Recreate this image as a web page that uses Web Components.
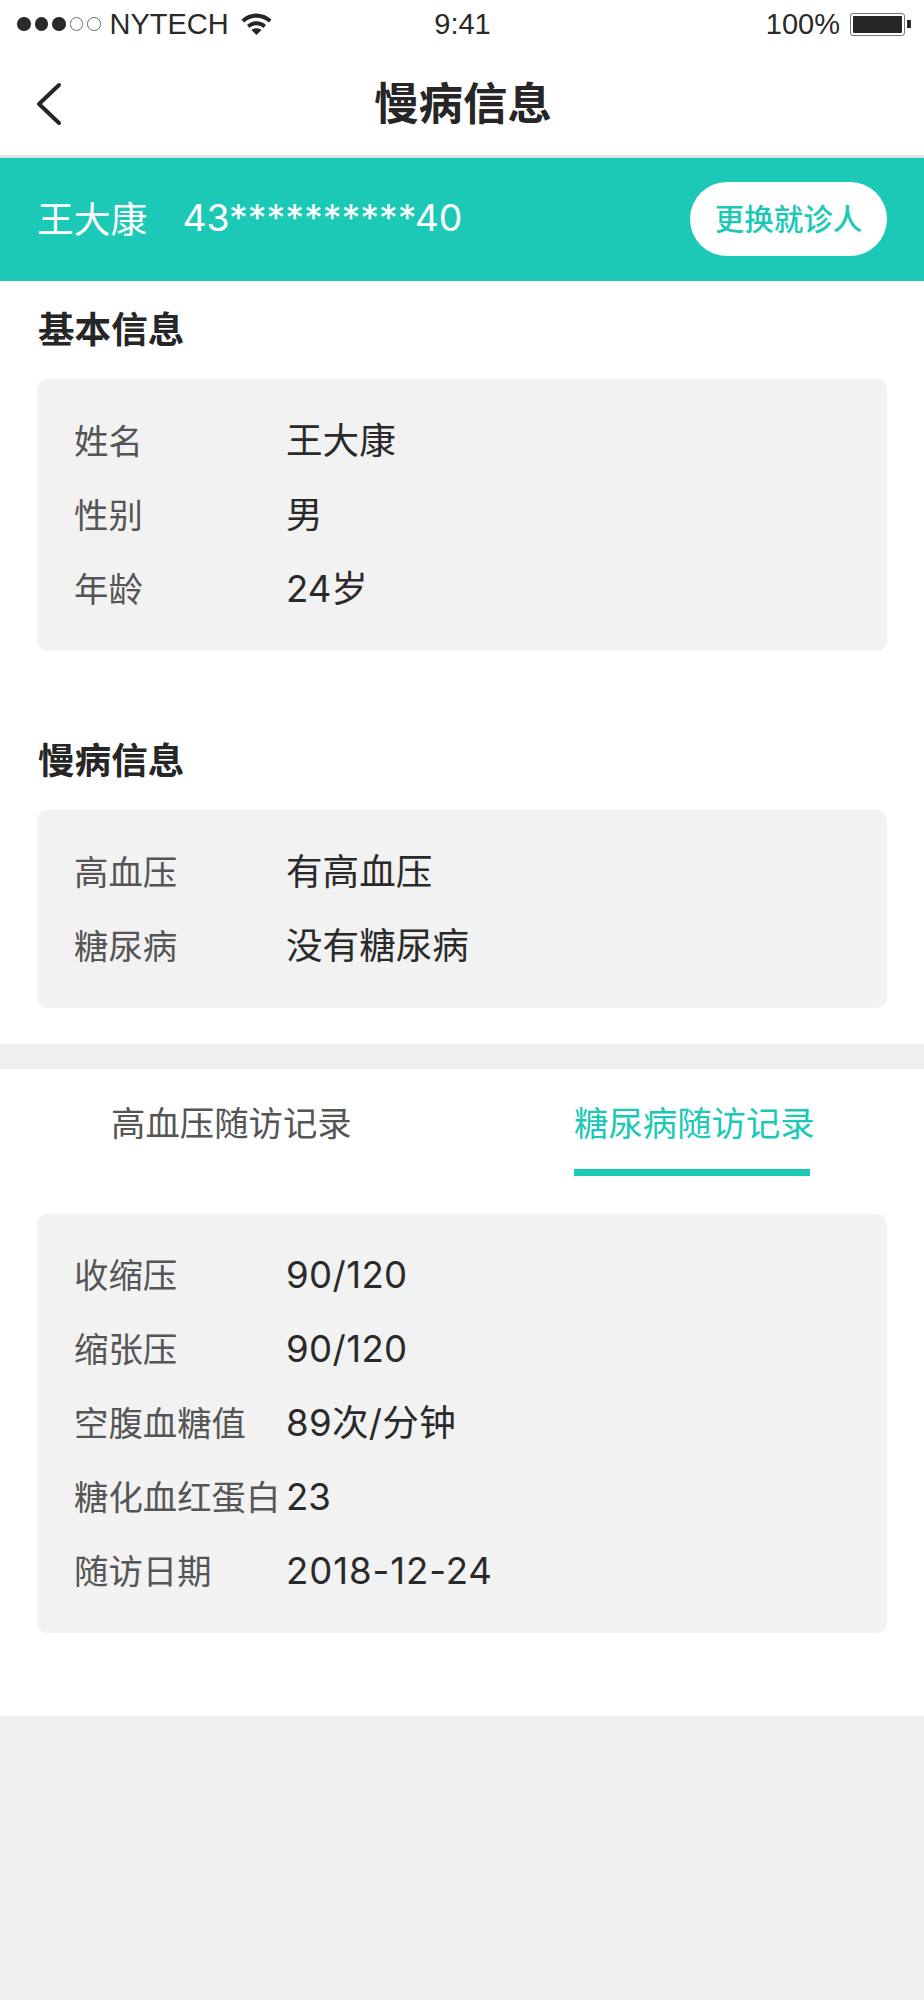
<!DOCTYPE html>
<html lang="zh-CN"><head><meta charset="utf-8"><style>
html,body{margin:0;padding:0;background:#efefef}
body{font-family:Inter,"Noto Sans CJK SC","Noto Sans",sans-serif;width:924px}
</style></head><body>
<app-page>
<status-bar></status-bar>
<nav-bar>慢病信息</nav-bar>
<patient-banner name="王大康" idno="43**********40" action="更换就诊人"></patient-banner>
<main-sheet>
  <info-section title="基本信息" style="--title-top:15px;--title-gap:15px">
    <info-row label="姓名">王大康</info-row>
    <info-row label="性别">男</info-row>
    <info-row label="年龄">24岁</info-row>
  </info-section>
  <info-section title="慢病信息" style="--title-top:76px;--title-gap:15px">
    <info-row label="高血压">有高血压</info-row>
    <info-row label="糖尿病">没有糖尿病</info-row>
  </info-section>
</main-sheet>
<record-panel>
  <tab-bar first="高血压随访记录" second="糖尿病随访记录"></tab-bar>
  <info-card style="--card-bottom:24px;--row-bottom:7px">
    <info-row label="收缩压" style="--v-top:5px;--v-ls:.4px">90/120</info-row>
    <info-row label="缩张压" style="--v-top:5px;--v-ls:.4px">90/120</info-row>
    <info-row label="空腹血糖值" style="--v-ls:.3px">89次/分钟</info-row>
    <info-row label="糖化血红蛋白" style="--v-top:5px">23</info-row>
    <info-row label="随访日期" style="--v-top:5px;--v-ls:.9px">2018-12-24</info-row>
  </info-card>
</record-panel>
</app-page>
<script>
const def=(name,html)=>customElements.define(name,class extends HTMLElement{
  connectedCallback(){ if(this.shadowRoot)return; const r=this.attachShadow({mode:'open'}); r.innerHTML=typeof html==='function'?html(this):html; }
});
def('app-page',`<style>:host{display:block;width:924px;min-height:2000px;background:#efefef}</style><slot></slot>`);
def('status-bar',`<style>
:host{display:grid;grid-template-columns:1fr auto 1fr;align-items:center;height:50px;padding:0 13px 2px 17px;box-sizing:border-box;background:#fff;color:#2a2a2a;font:29px/40px "Liberation Sans",sans-serif}
.dots{display:flex;gap:4px;margin-right:9px}
.dots i{width:13.500px;height:13.500px;border-radius:50%;background:#2a2a2a;box-sizing:border-box}
.dots i.o{background:none;border:1.500px solid #666}
.wifi{margin-left:12px}
.left,.right{display:flex;align-items:center}
.right{justify-content:flex-end}
.mid{padding-right:3px}
.bat{margin-left:10px;display:flex;align-items:center}
.body{width:55px;height:23px;border:1.500px solid #777;border-radius:3px;box-sizing:border-box;padding:2px;background:#fff}
.body b{display:block;height:100%;background:#262626;border-radius:1px}
.tip{width:4px;height:8px;background:#262626;margin-left:2px;border-radius:0 1px 1px 0}
</style>
<div class="left"><span class="dots"><i></i><i></i><i></i><i class="o"></i><i class="o"></i></span><span>NYTECH</span>
<svg class="wifi" width="31" height="22" viewBox="0 0 31 22"><path d="M0.500 6.500C9 -1.500 22 -1.500 30.500 6.500L28 9.500C20.500 3 10.500 3 3 9.500Z M6 12C11.500 7 19.500 7 25 12L22.500 15C18.300 11.300 12.700 11.300 8.500 15Z M10.500 17C13 14.600 18 14.600 20.500 17L15.500 22Z" fill="#262626"/></svg></div>
<div class="mid">9:41</div>
<div class="right"><span>100%</span><span class="bat"><span class="body"><b></b></span><span class="tip"></span></span></div>`);
def('nav-bar',`<style>
:host{display:flex;align-items:center;justify-content:center;height:105px;background:#fff;position:relative;border-bottom:3px solid #e2e2e2;color:#262626;font-size:44.400px;font-weight:700}
svg{position:absolute;left:35px;top:30px}
span{padding:0 0 4px 2px}
</style><svg width="28" height="48" viewBox="0 0 28 48"><path d="M24 5 L4 24 L24 43" fill="none" stroke="#262626" stroke-width="4" stroke-linecap="round" stroke-linejoin="round"/></svg><span><slot></slot></span>`);
def('patient-banner',h=>`<style>
:host{display:flex;align-items:center;height:123px;padding:0 37px;background:#1bc9b6;color:#fff;font-size:36.800px}
span{padding-bottom:5px}
.id{margin-left:35px;flex:1;font-size:37.400px}
button{all:unset;display:flex;align-items:center;justify-content:center;box-sizing:border-box;width:197px;height:74px;margin-bottom:2px;padding-bottom:3px;border-radius:37px;background:#fff;color:#1bc9b6;font-size:29.500px;font-weight:500}
</style><span>${h.getAttribute('name')}</span><span class="id">${h.getAttribute('idno')}</span><button>${h.getAttribute('action')}</button>`);
def('main-sheet',`<style>:host{display:block;background:#fff;padding-bottom:36px}</style><slot></slot>`);
def('info-section',h=>`<style>
:host{display:block;padding:0 37px}
h2{margin:0 0 var(--title-gap,15px);padding:var(--title-top,15px) 0 0 1px;font-size:36.600px;line-height:68px;font-weight:700;color:#262626}
</style><h2>${h.getAttribute('title')}</h2><info-card><slot></slot></info-card>`);
def('info-card',`<style>
:host{display:block;background:#f2f2f2;border-radius:10px;padding:25px 0 var(--card-bottom,25px) 37px}
</style><slot></slot>`);
def('info-row',h=>`<style>
:host{display:flex;box-sizing:border-box;height:74px;padding-bottom:var(--row-bottom,5px);align-items:center;font-size:34.400px;color:#555}
.l{width:212px;flex:none;white-space:nowrap}
.v{font-size:36.600px;color:#2a2a2a;white-space:nowrap;padding-top:var(--v-top,0);letter-spacing:var(--v-ls,0)}
</style><span class="l">${h.getAttribute('label')}</span><span class="v"><slot></slot></span>`);
def('record-panel',`<style>:host{display:block;background:#fff;margin-top:25px;padding:0 37px 83px}</style><slot></slot>`);
def('tab-bar',h=>`<style>
:host{display:grid;grid-template-columns:537px 1fr;height:145px;font-size:34.400px;color:#555}
div{padding-top:29px;line-height:52px}
.a{padding-left:74px}
.b{color:#1bc9b6}
.b span{display:inline-block;position:relative}
u{position:absolute;left:0;top:71px;display:block;width:236px;height:7px;background:#1bc9b6}
</style><div class="a">${h.getAttribute('first')}</div><div class="b"><span>${h.getAttribute('second')}<u></u></span></div>`);
</script>
</body></html>
